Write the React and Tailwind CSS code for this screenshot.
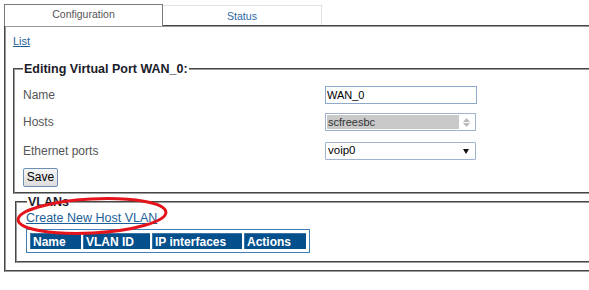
import React from "react";

const groove = "[border-style:groove]";

export default function App() {
  return (
    <div className="relative w-[589px] h-[290px] overflow-hidden bg-white font-['Liberation_Sans',Arial,sans-serif] text-[#222]">
      <div className="pt-[4px] pl-[4px]">
        {/* tabs */}
        <div className="flex items-start">
          <div className="relative z-10 w-[159px] h-[22px] border-t border-l border-r border-[#7a7a7a] bg-white flex justify-center pt-[2px] text-[10.5px] leading-[14px] text-[#555]">
            Configuration
          </div>
          <div className="mt-[1px] w-[159px] h-[20px] border-t border-r border-[#e2e2e2] flex justify-center pt-[3px] text-[10.5px] leading-[14px] text-[#2a68a8]">
            Status
          </div>
        </div>

        {/* panel */}
        <div className={`-mt-px w-[640px] h-[247px] border-2 border-r-0 border-[#9a9a9a] ${groove} pl-[7px] pt-[7px]`}>
          <a className="block text-[11px] leading-[14px] text-[#1d5f98] underline">List</a>

          <fieldset className={`mt-[13px] w-[640px] border-2 border-[#9a9a9a] ${groove} pl-[8px] pt-[9px] pb-[5px]`}>
            <legend className="px-[1px] text-[12.5px] leading-[16px] font-bold text-[#1b1b2a]">
              Editing Virtual Port WAN_0:
            </legend>

            <div className="flex items-center h-[18px]">
              <div className="w-[302px] text-[12px] text-[#555]">Name</div>
              <div className="w-[152px] h-[18px] border border-[#8fa9cc] flex items-center pl-[1px] text-[11px] text-black">
                WAN_0
              </div>
            </div>

            <div className="flex items-center h-[18px] mt-[9px]">
              <div className="w-[302px] text-[12px] text-[#555]">Hosts</div>
              <div className="w-[151px] h-[18px] border border-[#9fb3cf] flex p-[1px]">
                <div className="flex-1 bg-[#c9c9c9] flex items-center pl-[1px] text-[11px] text-[#333]">
                  scfreesbc
                </div>
                <div className="w-[15px] flex flex-col items-center justify-center gap-[1px]">
                  <svg width="7" height="4" viewBox="0 0 7 4"><path d="M0 4 L3.5 0 L7 4 Z" fill="#b8b8b8" /></svg>
                  <svg width="7" height="4" viewBox="0 0 7 4"><path d="M0 0 L3.5 4 L7 0 Z" fill="#b8b8b8" /></svg>
                </div>
              </div>
            </div>

            <div className="flex items-center h-[18px] mt-[11px]">
              <div className="w-[302px] text-[12px] text-[#555]">Ethernet ports</div>
              <div className="w-[151px] h-[18px] border border-[#9fb3cf] rounded-[1px] flex items-center pl-[2px] pr-[6px] text-[11.5px] text-black">
                <span className="flex-1">voip0</span>
                <svg width="6" height="5" viewBox="0 0 6 5"><path d="M0 0 L6 0 L3 5 Z" fill="#111" /></svg>
              </div>
            </div>

            <button className="mt-[8px] h-[19px] w-[35px] border border-[#6d8fb6] rounded-[2px] bg-gradient-to-b from-[#f6f6f6] to-[#dcdcdc] text-[12px] leading-[15px] text-black flex items-center justify-center">
              Save
            </button>
          </fieldset>

          <fieldset className={`ml-[2px] w-[640px] border-2 border-[#9a9a9a] ${groove} pl-[9px] pt-[1px] pb-[8px]`}>
            <legend className="ml-[1px] px-[1px] text-[12.5px] leading-[16px] font-bold text-[#1b1b2a]">
              VLANs
            </legend>
            <a className="block text-[12.5px] leading-[15px] text-[#1d5f98] underline">Create New Host VLAN</a>
            <div className="mt-[3px] inline-flex border border-[#3f7db5] p-[3px] gap-[2px]">
              {[
                ["Name", "w-[51px]"],
                ["VLAN ID", "w-[67px]"],
                ["IP interfaces", "w-[90px]"],
                ["Actions", "w-[62px]"],
              ].map(([t, w]) => (
                <div
                  key={t}
                  className={`${w} h-[16px] bg-[#04508d] border-l border-t border-[#3d74a6] flex items-center pl-[2px] text-[12px] font-bold text-white leading-[14px]`}
                >
                  {t}
                </div>
              ))}
            </div>
          </fieldset>
        </div>
      </div>

      {/* red annotation ellipse */}
      <svg className="absolute left-0 top-0 pointer-events-none" width="589" height="290">
        <ellipse
          cx="92"
          cy="216"
          rx="74"
          ry="17"
          fill="none"
          stroke="#e3141b"
          strokeWidth="3"
          transform="rotate(-3 92 216)"
        />
      </svg>
    </div>
  );
}
